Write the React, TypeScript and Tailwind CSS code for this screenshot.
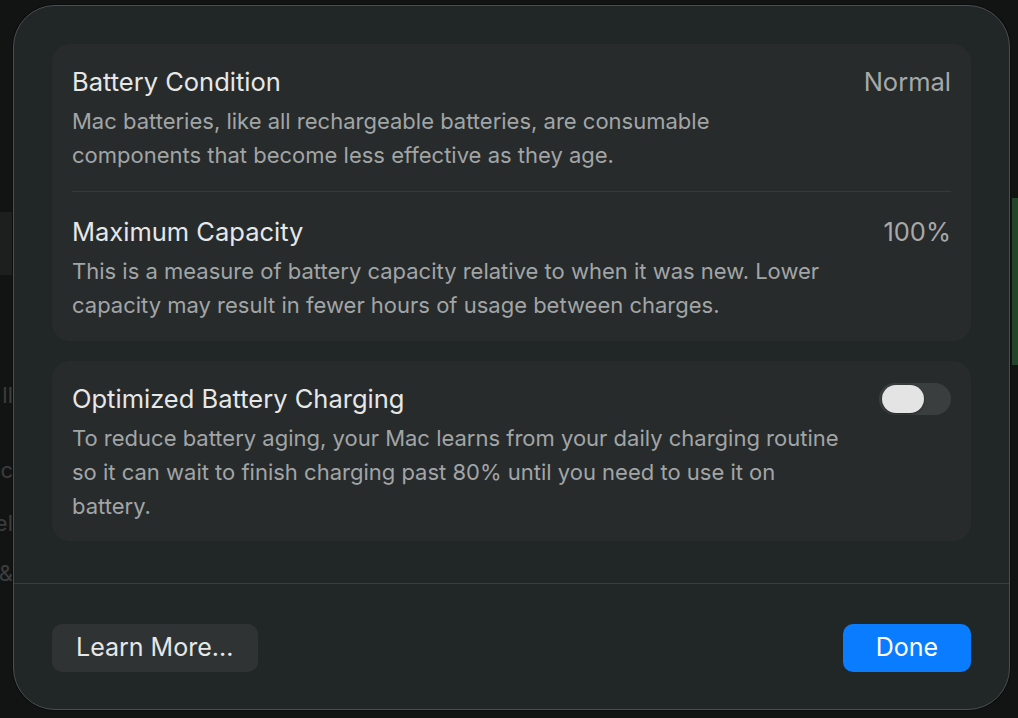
import React from "react";

const font = { fontFamily: "Inter, 'Noto Sans', 'Liberation Sans', sans-serif" };

function Toggle() {
  return (
    <div className="w-[72px] h-[32px] rounded-full bg-[#3a3e3f] flex items-center pl-[3px] shrink-0">
      <div className="w-[42px] h-[28px] rounded-full bg-[#e4e4e4] shadow-[0_1px_2px_rgba(0,0,0,0.4)]" />
    </div>
  );
}

function Row({ title, value, children }: { title: string; value?: React.ReactNode; children: React.ReactNode }) {
  return (
    <div>
      <div className="flex items-center justify-between h-[32px]">
        <span className="text-[25.5px] text-[#e6e7e7]">{title}</span>
        {value}
      </div>
      <p className="mt-[6px] text-[22px] leading-[34px] text-[#a2a5a6] whitespace-nowrap">{children}</p>
    </div>
  );
}

export default function App() {
  return (
    <div className="relative w-[1018px] h-[718px] bg-[#121414] overflow-hidden pt-[5px] pl-[13px]" style={font}>
      {/* app window peeking out behind the sheet */}
      <div className="absolute left-0 top-[212px] w-[12px] h-[63px] bg-[#1d1f1e]" />
      <div className="absolute right-[-2px] top-[198px] w-[8px] h-[167px] bg-[#23462a]" />
      <div className="absolute left-[-20px] top-[380px] w-[33px] text-right text-[22px] leading-[30px] text-[#3b3d3d] flex flex-col">
        <span>ll</span>
        <span className="mt-[45px]">nc</span>
        <span className="mt-[23px]">el</span>
        <span className="mt-[20px]">&amp;</span>
      </div>

      <div className="relative w-[997px] h-[705px] rounded-[42px] bg-[#212627] border border-[#4b4f51] shadow-[0_0_0_1px_#0c0d0d] flex flex-col">
        <div className="px-[38px] pt-[38px] flex flex-col gap-[20px]">
          <div className="rounded-[18px] bg-[#272b2c] px-[20px] pt-[22px] pb-[19px]">
            <Row title="Battery Condition" value={<span className="text-[25.5px] text-[#a6a9aa]">Normal</span>}>
              Mac batteries, like all rechargeable batteries, are consumable
              <br />
              components that become less effective as they age.
            </Row>
            <div className="h-px bg-[#363a3b] mt-[19px] mb-[24px]" />
            <Row title="Maximum Capacity" value={<span className="text-[25.5px] text-[#a6a9aa]">100%</span>}>
              This is a measure of battery capacity relative to when it was new. Lower
              <br />
              capacity may result in fewer hours of usage between charges.
            </Row>
          </div>
          <div className="rounded-[18px] bg-[#272b2c] px-[20px] pt-[22px] pb-[18px]">
            <Row title="Optimized Battery Charging" value={<Toggle />}>
              To reduce battery aging, your Mac learns from your daily charging routine
              <br />
              so it can wait to finish charging past 80% until you need to use it on
              <br />
              battery.
            </Row>
          </div>
        </div>
        <div className="h-px bg-[#3a3e40] mt-[42px]" />
        <div className="flex justify-between px-[38px] pt-[40px]">
          <button className="h-[48px] w-[206px] rounded-[10px] bg-[#2f3334] text-[25px] text-[#e6e7e7] text-left pl-[24px]">
            Learn More...
          </button>
          <button className="h-[48px] w-[128px] rounded-[10px] bg-[#0a7cff] text-[25px] text-white">
            Done
          </button>
        </div>
      </div>
    </div>
  );
}
